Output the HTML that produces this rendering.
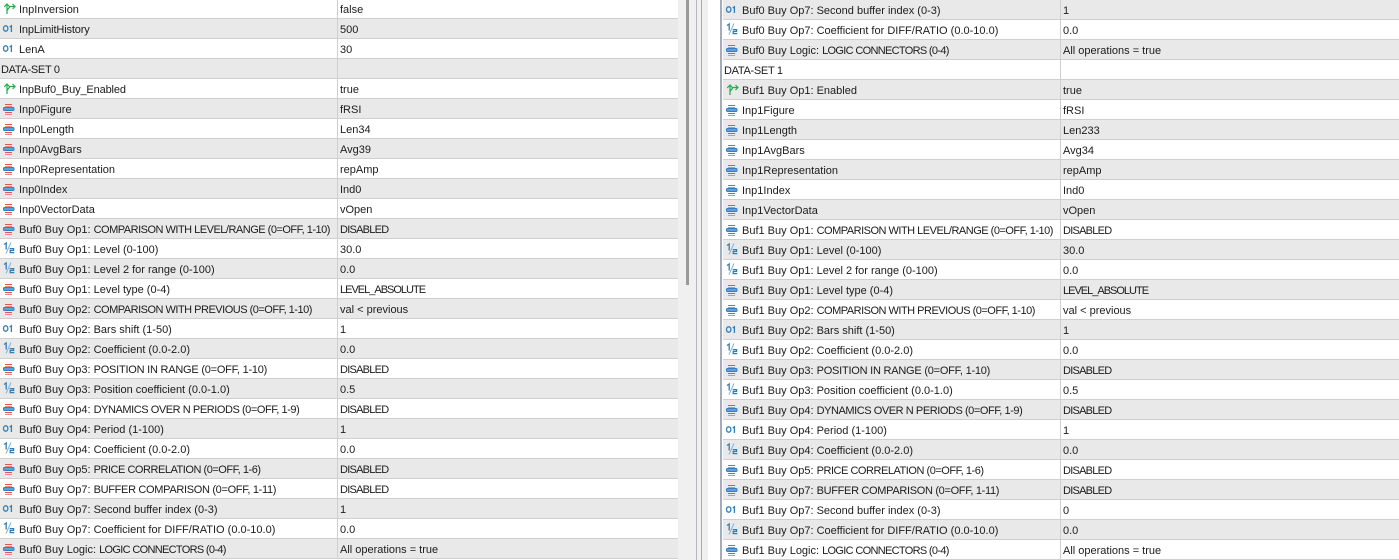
<!DOCTYPE html>
<html><head><meta charset="utf-8">
<style>
html,body{margin:0;padding:0;width:1399px;height:560px;overflow:hidden;background:#fff}
#bg1{position:absolute;left:678px;top:0;width:30px;height:560px;background:#f0f0f0}
#w{position:absolute;left:708px;top:0;width:12px;height:560px;background:#fff}
#sb{position:absolute;left:686px;top:0;width:3px;height:285px;background:#9a9a9a}
#l1{position:absolute;left:696px;top:0;width:1px;height:560px;background:#b4b6c4}
#l2{position:absolute;left:701px;top:0;width:1px;height:560px;background:#a8a8a8}
#b{position:absolute;left:720px;top:0;width:2px;height:560px;background:#a4acbc}
.p{position:absolute;top:0;height:560px;overflow:hidden;font:11px/19px "Liberation Sans",sans-serif;color:#1c1c1c}
#L{left:0;width:678px}
#R{left:723px;width:676px}
.i{position:absolute;left:0;top:-1px;width:100%}
#R .i{top:0}
.r{position:relative;height:19px;border-bottom:1px solid #cfcfcf;background:#fff;white-space:nowrap}
.g{background:#e9e9e9}
.r svg{position:absolute;left:0;top:0;width:20px;height:19px}
.n{position:absolute;left:19px;top:1.5px}
.d{position:absolute;left:1px;top:1.5px;letter-spacing:-.3px}
.v{position:absolute;left:337px;top:0;bottom:-1px;border-left:1px solid #cfcfcf;padding:1.5px 0 0 2px;box-sizing:border-box}
i{font-style:normal}
.c1{letter-spacing:-.5px}.c3{letter-spacing:-.23px}.c4{letter-spacing:-.44px}.c5{letter-spacing:-.47px}.c7{letter-spacing:-.32px}.c8{letter-spacing:-.68px}
.dis{letter-spacing:-.75px}.lev{letter-spacing:-1px}.s{letter-spacing:-.14px}
</style></head><body>
<svg width="0" height="0" style="position:absolute">
<symbol id="a" viewBox="0 0 20 19"><path d="M7 15V5M4.2 8L7 5L9.8 8M7 11.5L10 7.5H15M12.5 5L15 7.5L12.5 10" fill="none" stroke="#22ad4c" stroke-width="1.2"/></symbol>
<symbol id="o" viewBox="0 0 20 19"><ellipse cx="5.7" cy="9.5" rx="2.2" ry="2.7" fill="none" stroke="#2f7fbd" stroke-width="1.3"/><path d="M9.7 8L11.4 6.8V13" fill="none" stroke="#2f7fbd" stroke-width="1.3"/></symbol>
<symbol id="e" viewBox="0 0 20 19"><path d="M5 5.5H12M5 13.5H12" stroke="#e8524a" fill="none"/><path d="M5 15.5H12" stroke="#ee8a84" fill="none"/><path d="M5 7.5H12" stroke="#ee8a84" fill="none"/><rect x="3.5" y="8.5" width="10.5" height="3" rx="1" fill="#5f9fdc" stroke="#2f7fcb"/></symbol>
<symbol id="h" viewBox="0 0 20 19"><path d="M4 5.5L6.2 4V10.5" fill="none" stroke="#2f7fbd" stroke-width="1.3"/><path d="M6 14.5L11 3.5" fill="none" stroke="#7fb2da"/><path d="M9.7 9.7H13.6V11.5H10.2V13.6H14.3" fill="none" stroke="#2f7fbd" stroke-width="1.3"/></symbol>
</svg>
<div id="bg1"></div><div id="sb"></div><div id="l1"></div><div id="l2"></div><div id="w"></div><div id="b"></div>
<div id="L" class="p"><div class="i">
<div class="r"><svg><use href="#a"/></svg><span class="n">InpInversion</span><span class="v">false</span></div>
<div class="r g"><svg><use href="#o"/></svg><span class="n s">InpLimitHistory</span><span class="v">500</span></div>
<div class="r"><svg><use href="#o"/></svg><span class="n">LenA</span><span class="v">30</span></div>
<div class="r g"><span class="d">DATA-SET 0</span><span class="v"></span></div>
<div class="r"><svg><use href="#a"/></svg><span class="n s">InpBuf0_Buy_Enabled</span><span class="v">true</span></div>
<div class="r g"><svg><use href="#e"/></svg><span class="n">Inp0Figure</span><span class="v">fRSI</span></div>
<div class="r"><svg><use href="#e"/></svg><span class="n">Inp0Length</span><span class="v">Len34</span></div>
<div class="r g"><svg><use href="#e"/></svg><span class="n">Inp0AvgBars</span><span class="v">Avg39</span></div>
<div class="r"><svg><use href="#e"/></svg><span class="n">Inp0Representation</span><span class="v">repAmp</span></div>
<div class="r g"><svg><use href="#e"/></svg><span class="n">Inp0Index</span><span class="v">Ind0</span></div>
<div class="r"><svg><use href="#e"/></svg><span class="n">Inp0VectorData</span><span class="v">vOpen</span></div>
<div class="r g"><svg><use href="#e"/></svg><span class="n">Buf0 Buy Op1: <i class="c1">COMPARISON WITH LEVEL/RANGE (0=OFF, 1-10)</i></span><span class="v dis">DISABLED</span></div>
<div class="r"><svg><use href="#h"/></svg><span class="n">Buf0 Buy Op1: Level (0-100)</span><span class="v">30.0</span></div>
<div class="r g"><svg><use href="#h"/></svg><span class="n">Buf0 Buy Op1: Level 2 for range (0-100)</span><span class="v">0.0</span></div>
<div class="r"><svg><use href="#e"/></svg><span class="n">Buf0 Buy Op1: Level type (0-4)</span><span class="v lev">LEVEL_ABSOLUTE</span></div>
<div class="r g"><svg><use href="#e"/></svg><span class="n">Buf0 Buy Op2: <i class="c1">COMPARISON WITH PREVIOUS (0=OFF, 1-10)</i></span><span class="v">val &lt; previous</span></div>
<div class="r"><svg><use href="#o"/></svg><span class="n">Buf0 Buy Op2: Bars shift (1-50)</span><span class="v">1</span></div>
<div class="r g"><svg><use href="#h"/></svg><span class="n">Buf0 Buy Op2: Coefficient (0.0-2.0)</span><span class="v">0.0</span></div>
<div class="r"><svg><use href="#e"/></svg><span class="n">Buf0 Buy Op3: <i class="c3">POSITION IN RANGE (0=OFF, 1-10)</i></span><span class="v dis">DISABLED</span></div>
<div class="r g"><svg><use href="#h"/></svg><span class="n">Buf0 Buy Op3: Position coefficient (0.0-1.0)</span><span class="v">0.5</span></div>
<div class="r"><svg><use href="#e"/></svg><span class="n">Buf0 Buy Op4: <i class="c4">DYNAMICS OVER N PERIODS (0=OFF, 1-9)</i></span><span class="v dis">DISABLED</span></div>
<div class="r g"><svg><use href="#o"/></svg><span class="n">Buf0 Buy Op4: Period (1-100)</span><span class="v">1</span></div>
<div class="r"><svg><use href="#h"/></svg><span class="n">Buf0 Buy Op4: Coefficient (0.0-2.0)</span><span class="v">0.0</span></div>
<div class="r g"><svg><use href="#e"/></svg><span class="n">Buf0 Buy Op5: <i class="c5">PRICE CORRELATION (0=OFF, 1-6)</i></span><span class="v dis">DISABLED</span></div>
<div class="r"><svg><use href="#e"/></svg><span class="n">Buf0 Buy Op7: <i class="c7">BUFFER COMPARISON (0=OFF, 1-11)</i></span><span class="v dis">DISABLED</span></div>
<div class="r g"><svg><use href="#o"/></svg><span class="n">Buf0 Buy Op7: Second buffer index (0-3)</span><span class="v">1</span></div>
<div class="r"><svg><use href="#h"/></svg><span class="n">Buf0 Buy Op7: Coefficient for DIFF/RATIO (0.0-10.0)</span><span class="v">0.0</span></div>
<div class="r g"><svg><use href="#e"/></svg><span class="n">Buf0 Buy Logic: <i class="c8">LOGIC CONNECTORS (0-4)</i></span><span class="v">All operations = true</span></div>
<div class="r"></div>
</div></div>
<div id="R" class="p"><div class="i">
<div class="r g"><svg><use href="#o"/></svg><span class="n">Buf0 Buy Op7: Second buffer index (0-3)</span><span class="v">1</span></div>
<div class="r"><svg><use href="#h"/></svg><span class="n">Buf0 Buy Op7: Coefficient for DIFF/RATIO (0.0-10.0)</span><span class="v">0.0</span></div>
<div class="r g"><svg><use href="#e"/></svg><span class="n">Buf0 Buy Logic: <i class="c8">LOGIC CONNECTORS (0-4)</i></span><span class="v">All operations = true</span></div>
<div class="r"><span class="d">DATA-SET 1</span><span class="v"></span></div>
<div class="r g"><svg><use href="#a"/></svg><span class="n">Buf1 Buy Op1: Enabled</span><span class="v">true</span></div>
<div class="r"><svg><use href="#e"/></svg><span class="n">Inp1Figure</span><span class="v">fRSI</span></div>
<div class="r g"><svg><use href="#e"/></svg><span class="n">Inp1Length</span><span class="v">Len233</span></div>
<div class="r"><svg><use href="#e"/></svg><span class="n">Inp1AvgBars</span><span class="v">Avg34</span></div>
<div class="r g"><svg><use href="#e"/></svg><span class="n">Inp1Representation</span><span class="v">repAmp</span></div>
<div class="r"><svg><use href="#e"/></svg><span class="n">Inp1Index</span><span class="v">Ind0</span></div>
<div class="r g"><svg><use href="#e"/></svg><span class="n">Inp1VectorData</span><span class="v">vOpen</span></div>
<div class="r"><svg><use href="#e"/></svg><span class="n">Buf1 Buy Op1: <i class="c1">COMPARISON WITH LEVEL/RANGE (0=OFF, 1-10)</i></span><span class="v dis">DISABLED</span></div>
<div class="r g"><svg><use href="#h"/></svg><span class="n">Buf1 Buy Op1: Level (0-100)</span><span class="v">30.0</span></div>
<div class="r"><svg><use href="#h"/></svg><span class="n">Buf1 Buy Op1: Level 2 for range (0-100)</span><span class="v">0.0</span></div>
<div class="r g"><svg><use href="#e"/></svg><span class="n">Buf1 Buy Op1: Level type (0-4)</span><span class="v lev">LEVEL_ABSOLUTE</span></div>
<div class="r"><svg><use href="#e"/></svg><span class="n">Buf1 Buy Op2: <i class="c1">COMPARISON WITH PREVIOUS (0=OFF, 1-10)</i></span><span class="v">val &lt; previous</span></div>
<div class="r g"><svg><use href="#o"/></svg><span class="n">Buf1 Buy Op2: Bars shift (1-50)</span><span class="v">1</span></div>
<div class="r"><svg><use href="#h"/></svg><span class="n">Buf1 Buy Op2: Coefficient (0.0-2.0)</span><span class="v">0.0</span></div>
<div class="r g"><svg><use href="#e"/></svg><span class="n">Buf1 Buy Op3: <i class="c3">POSITION IN RANGE (0=OFF, 1-10)</i></span><span class="v dis">DISABLED</span></div>
<div class="r"><svg><use href="#h"/></svg><span class="n">Buf1 Buy Op3: Position coefficient (0.0-1.0)</span><span class="v">0.5</span></div>
<div class="r g"><svg><use href="#e"/></svg><span class="n">Buf1 Buy Op4: <i class="c4">DYNAMICS OVER N PERIODS (0=OFF, 1-9)</i></span><span class="v dis">DISABLED</span></div>
<div class="r"><svg><use href="#o"/></svg><span class="n">Buf1 Buy Op4: Period (1-100)</span><span class="v">1</span></div>
<div class="r g"><svg><use href="#h"/></svg><span class="n">Buf1 Buy Op4: Coefficient (0.0-2.0)</span><span class="v">0.0</span></div>
<div class="r"><svg><use href="#e"/></svg><span class="n">Buf1 Buy Op5: <i class="c5">PRICE CORRELATION (0=OFF, 1-6)</i></span><span class="v dis">DISABLED</span></div>
<div class="r g"><svg><use href="#e"/></svg><span class="n">Buf1 Buy Op7: <i class="c7">BUFFER COMPARISON (0=OFF, 1-11)</i></span><span class="v dis">DISABLED</span></div>
<div class="r"><svg><use href="#o"/></svg><span class="n">Buf1 Buy Op7: Second buffer index (0-3)</span><span class="v">0</span></div>
<div class="r g"><svg><use href="#h"/></svg><span class="n">Buf1 Buy Op7: Coefficient for DIFF/RATIO (0.0-10.0)</span><span class="v">0.0</span></div>
<div class="r"><svg><use href="#e"/></svg><span class="n">Buf1 Buy Logic: <i class="c8">LOGIC CONNECTORS (0-4)</i></span><span class="v">All operations = true</span></div>
</div></div>
</body></html>
